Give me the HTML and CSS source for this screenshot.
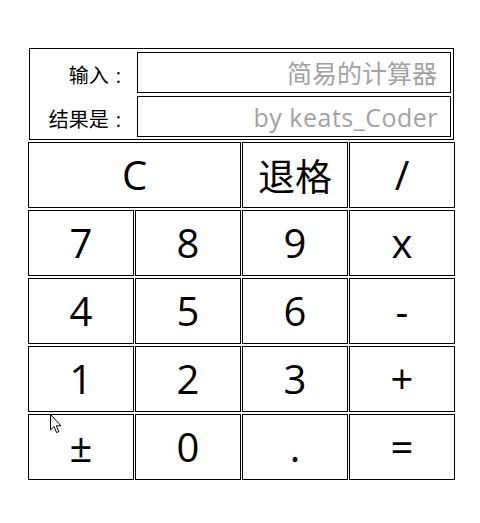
FILE: index.html
```html
<!DOCTYPE html>
<html lang="zh-CN">
<head>
<meta charset="utf-8">
<title>简易的计算器</title>
<link rel="stylesheet" href="styles.css">
</head>
<body>
<div class="calc">
  <div class="head">
    <div class="screen">
      <label class="lbl" for="in">输入<span class="colon">:</span></label>
      <input id="in" class="field" type="text" placeholder="简易的计算器">
      <label class="lbl" for="out">结果是<span class="colon">:</span></label>
      <input id="out" class="field latin" type="text" placeholder="by keats_Coder">
    </div>
  </div>
  <div class="keys">
    <button class="key wide">C</button>
    <button class="key cjk">退格</button>
    <button class="key">/</button>
    <button class="key">7</button>
    <button class="key">8</button>
    <button class="key">9</button>
    <button class="key">x</button>
    <button class="key">4</button>
    <button class="key">5</button>
    <button class="key">6</button>
    <button class="key">-</button>
    <button class="key">1</button>
    <button class="key">2</button>
    <button class="key">3</button>
    <button class="key">+</button>
    <button class="key">±</button>
    <button class="key">0</button>
    <button class="key">.</button>
    <button class="key">=</button>
  </div>
</div>
<svg class="cursor" width="13" height="20" viewBox="0 0 13 20" aria-hidden="true">
  <path d="M0.5 0.5 L0.5 16 L4 12.6 L6.6 18.6 L8.8 17.6 L6.3 11.8 L11 11.8 Z" fill="#fff" stroke="#000" stroke-width="1" stroke-linejoin="miter"/>
</svg>
</body>
</html>
```
FILE: styles.css
```css
html, body {
  margin: 0;
  padding: 0;
  background: #fff;
}
body {
  position: relative;
  width: 480px;
  height: 523px;
  font-family: "Open Sans", "Noto Sans CJK SC", sans-serif;
}
.calc {
  position: absolute;
  left: 28px;
  top: 47px;
  width: 427px;
}
.head {
  padding: 1px;
}
.screen {
  border: 1px solid #000;
  display: grid;
  grid-template-columns: 105px 1fr;
  grid-auto-rows: 41px;
  row-gap: 3px;
  padding: 3px 2px 2px 2px;
}
.lbl {
  box-sizing: border-box;
  height: 41px;
  font-family: "Noto Sans CJK SC", sans-serif;
  font-size: 20px;
  color: #000;
  text-align: right;
  padding-right: 16px;
  padding-top: 4px;
  line-height: 37px;
  white-space: nowrap;
}
.colon {
  font-family: "Open Sans", sans-serif;
  margin-left: 7px;
}
.field {
  box-sizing: border-box;
  height: 41px;
  width: 100%;
  margin: 0;
  border: 1px solid #000;
  border-radius: 0;
  background: #fff;
  outline: none;
  text-align: right;
  padding: 0 13px 0 4px;
  font-family: "Open Sans", "Noto Sans CJK SC", sans-serif;
  font-size: 25px;
  color: #000;
}
.field.latin {
  letter-spacing: 0.5px;
  padding-right: 12px;
}
.field::placeholder {
  color: #a3a3a3;
  opacity: 1;
}
.keys {
  margin-top: 1px;
  display: grid;
  grid-template-columns: repeat(4, 106px);
  grid-auto-rows: 66px;
  column-gap: 1px;
  row-gap: 2px;
}
.key {
  box-sizing: border-box;
  margin: 0;
  padding: 0;
  border: 1px solid #000;
  border-radius: 0;
  background: #fff;
  color: #000;
  font-family: "Open Sans", "Noto Sans CJK SC", sans-serif;
  font-size: 40px;
  line-height: 1;
  display: flex;
  align-items: center;
  justify-content: center;
}
.key.cjk {
  font-family: "Noto Sans CJK SC", sans-serif;
  font-size: 37px;
}
.wide {
  grid-column: span 2;
}
.cursor {
  position: absolute;
  left: 50px;
  top: 414px;
}
```
